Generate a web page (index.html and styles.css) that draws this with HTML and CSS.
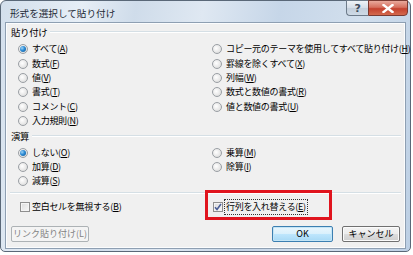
FILE: index.html
```html
<!DOCTYPE html>
<html lang="ja">
<head>
<meta charset="utf-8">
<link rel="stylesheet" href="styles.css">
</head>
<body>
<div class="window">
  <div class="titlebar">
    <span class="title">形式を選択して貼り付け</span>
    <div class="caption-btns">
      <div class="cap help">?</div>
      <div class="cap close">
        <svg width="12" height="9" viewBox="0 0 12 9"><path d="M1.5 1 L10.5 8 M10.5 1 L1.5 8" stroke="#fff" stroke-width="2.4" stroke-linecap="square"/></svg>
      </div>
    </div>
  </div>
  <div class="client">
    <div class="legend"><span>貼り付け</span></div>
    <div class="opts paste">
      <div class="opt"><span class="radio on"></span>すべて(<u>A</u>)</div>
      <div class="opt"><span class="radio"></span>数式(<u>F</u>)</div>
      <div class="opt"><span class="radio"></span>値(<u>V</u>)</div>
      <div class="opt"><span class="radio"></span>書式(<u>T</u>)</div>
      <div class="opt"><span class="radio"></span>コメント(<u>C</u>)</div>
      <div class="opt"><span class="radio"></span>入力規則(<u>N</u>)</div>
      <div class="opt"><span class="radio"></span>コピー元のテーマを使用してすべて貼り付け(<u>H</u>)</div>
      <div class="opt"><span class="radio"></span>罫線を除くすべて(<u>X</u>)</div>
      <div class="opt"><span class="radio"></span>列幅(<u>W</u>)</div>
      <div class="opt"><span class="radio"></span>数式と数値の書式(<u>R</u>)</div>
      <div class="opt"><span class="radio"></span>値と数値の書式(<u>U</u>)</div>
    </div>
    <div class="legend op"><span>演算</span></div>
    <div class="opts ops">
      <div class="opt"><span class="radio on"></span>しない(<u>O</u>)</div>
      <div class="opt"><span class="radio"></span>加算(<u>D</u>)</div>
      <div class="opt"><span class="radio"></span>減算(<u>S</u>)</div>
      <div class="opt"><span class="radio"></span>乗算(<u>M</u>)</div>
      <div class="opt"><span class="radio"></span>除算(<u>I</u>)</div>
    </div>
    <div class="sep"></div>
    <div class="checks">
      <div class="opt"><span class="check"></span>空白セルを無視する(<u>B</u>)</div>
      <div class="opt"><span class="check on"><svg width="8" height="8" viewBox="0 0 8 8"><path d="M1 4.2 L3 6.5 L7 1" fill="none" stroke="#4a5f97" stroke-width="1.6"/></svg></span><span class="focus">行列を入れ替える(<u>E</u>)</span></div>
      <div class="mark"></div>
    </div>
    <div class="buttons">
      <div class="btn disabled">リンク貼り付け(L)</div>
      <div class="spacer"></div>
      <div class="btn default">OK</div>
      <div class="btn">キャンセル</div>
    </div>
  </div>
</div>
</body>
</html>
```
FILE: styles.css
```css
html, body {
  margin: 0;
  padding: 0;
  background: #ffffff;
}
body {
  width: 413px;
  height: 255px;
  overflow: hidden;
  font-family: "Noto Sans CJK JP", "Noto Sans", sans-serif;
  font-size: 9px;
  letter-spacing: -0.3px;
  color: #000;
}
.window {
  width: 411px;
  height: 252px;
  box-sizing: border-box;
  border: 1px solid #5a6878;
  border-radius: 6px 6px 5px 5px;
  background: linear-gradient(100deg, #d3dfec 0%, #e6eef6 18%, #cfdcea 30%, #dfe8f2 45%, #c6d6e8 62%, #d2dfed 80%, #bccfe4 100%);
  display: flex;
  flex-direction: column;
  padding: 0 4px 2px 4px;
}
.titlebar {
  height: 21px;
  display: flex;
  align-items: flex-start;
  justify-content: space-between;
}
.title {
  margin-left: 5px;
  margin-top: 5px;
  line-height: 14px;
  font-size: 9.6px;
  letter-spacing: 0;
  color: #1e2a36;
}
.caption-btns {
  display: flex;
  margin-top: -1px;
  margin-right: -2px;
}
.cap {
  height: 16px;
  box-sizing: border-box;
  border: 1px solid #6d7b8a;
  display: flex;
  align-items: center;
  justify-content: center;
}
.help {
  width: 22px;
  border-radius: 0 0 0 4px;
  border-right: none;
  background: linear-gradient(#eef3f8, #d4dde8 50%, #c3cfdc 51%, #cfdae6);
  color: #3b4a5a;
  font-family: "DejaVu Sans", sans-serif;
  font-size: 11px;
  font-weight: bold;
}
.close {
  width: 40px;
  border-radius: 0 0 4px 0;
  border-color: #7a3a32;
  background: linear-gradient(#e9a99c, #d6705f 45%, #c4412e 55%, #d46a4e);
}
.client {
  flex: 1;
  background: #f0f0f0;
  border: 1px solid #8e9fb2;
  box-shadow: inset 0 0 0 1px #fbfcfd;
  display: flex;
  flex-direction: column;
  position: relative;
}
.legend {
  display: flex;
  align-items: center;
  height: 12px;
  margin: 3px 4px 0 5px;
  font-size: 9.4px;
}
.legend span {
  line-height: 12px;
  padding-right: 3px;
}
.legend::after {
  content: "";
  flex: 1;
  height: 1px;
  background: #d5dfe5;
  border-bottom: 1px solid #fff;
}
.legend.op {
  margin-top: 2px;
}
.opts {
  display: grid;
  grid-template-columns: 194px 1fr;
  grid-auto-flow: column;
  margin: 4px 0 0 12px;
}
.opts.paste {
  grid-template-rows: repeat(6, 14.4px);
}
.opts.ops {
  grid-template-rows: repeat(3, 14.4px);
  margin-top: 3px;
}
.opt {
  display: flex;
  align-items: center;
  white-space: nowrap;
  line-height: 14px;
}
u {
  text-decoration: underline;
  text-underline-offset: 1px;
}
.radio {
  width: 10px;
  height: 10px;
  box-sizing: border-box;
  border-radius: 50%;
  border: 1px solid #9a9fa4;
  background: radial-gradient(circle at 40% 40%, #ffffff 0%, #e6e6e6 60%, #d2d2d2 100%);
  margin-right: 4px;
  flex: none;
  display: flex;
  align-items: center;
  justify-content: center;
}
.radio.on::after {
  content: "";
  width: 6px;
  height: 6px;
  border-radius: 50%;
  background: radial-gradient(circle at 35% 35%, #9fd3f5 0%, #2a8ad4 45%, #14558f 100%);
}
.sep {
  height: 1px;
  background: #d5dfe5;
  border-bottom: 1px solid #fff;
  margin: 3px 4px 0 4px;
}
.checks {
  display: grid;
  grid-template-columns: 193px 1fr;
  margin: 6px 0 0 14px;
  height: 14px;
  position: relative;
}
.check {
  width: 10px;
  height: 10px;
  box-sizing: border-box;
  border: 1px solid #8f8f8f;
  background: linear-gradient(135deg, #dcdcdc, #f7f7f7);
  box-shadow: inset 0 0 0 1px #f4f4f4;
  margin-right: 2px;
  flex: none;
  display: flex;
  align-items: center;
  justify-content: center;
}
.focus {
  outline: 1px dotted #333;
  outline-offset: 0px;
  padding: 0 1px;
}
.mark {
  position: absolute;
  left: 185px;
  top: -10px;
  width: 127px;
  height: 30px;
  box-sizing: border-box;
  border: 3px solid #e0141e;
}
.buttons {
  display: flex;
  align-items: center;
  margin: 12px 5px 0 5px;
  gap: 9px;
}
.spacer {
  flex: 1;
}
.btn {
  height: 16px;
  box-sizing: border-box;
  border: 1px solid #707070;
  border-radius: 2px;
  background: linear-gradient(#f3f3f3, #ececec 50%, #dddddd 51%, #cfcfcf);
  box-shadow: inset 0 0 0 1px #fbfbfb;
  display: flex;
  align-items: center;
  justify-content: center;
  font-size: 9px;
  letter-spacing: 0;
  line-height: 14px;
  width: 58px;
}
.btn.disabled {
  width: 78px;
  border-color: #adb2b5;
  background: #f4f4f4;
  color: #838383;
  box-shadow: none;
}
.btn.default {
  width: 61px;
  border-color: #3c7fb1;
  background: linear-gradient(#eaf6fd, #d9f0fc 50%, #bee6fd 51%, #a7d9f5);
  box-shadow: inset 0 0 0 1px #c4e5f6;
}
```
